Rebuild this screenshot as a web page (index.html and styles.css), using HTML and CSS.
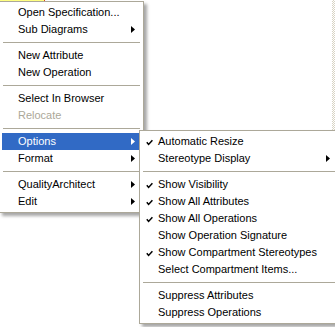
FILE: index.html
```html
<!DOCTYPE html>
<html lang="en">
<head>
    <meta charset="UTF-8">
    <title>Class Context Menu</title>
    <link rel="stylesheet" href="styles.css">
</head>
<body>
    <div class="canvas">
        <div class="selection-mark"></div>
        <div class="window-edge"></div>

        <div class="menu main-menu">
            <div class="item">Open Specification...</div>
            <div class="item has-sub">Sub Diagrams
                <svg class="arrow" width="4" height="7" viewBox="0 0 4 7"><polygon points="0,0 4,3.5 0,7"/></svg>
            </div>
            <div class="sep"></div>
            <div class="item">New Attribute</div>
            <div class="item">New Operation</div>
            <div class="sep"></div>
            <div class="item">Select In Browser</div>
            <div class="item disabled">Relocate</div>
            <div class="sep"></div>
            <div class="item has-sub active">Options
                <svg class="arrow" width="4" height="7" viewBox="0 0 4 7"><polygon points="0,0 4,3.5 0,7"/></svg>
            </div>
            <div class="item has-sub">Format
                <svg class="arrow" width="4" height="7" viewBox="0 0 4 7"><polygon points="0,0 4,3.5 0,7"/></svg>
            </div>
            <div class="sep"></div>
            <div class="item has-sub">QualityArchitect
                <svg class="arrow" width="4" height="7" viewBox="0 0 4 7"><polygon points="0,0 4,3.5 0,7"/></svg>
            </div>
            <div class="item has-sub">Edit
                <svg class="arrow" width="4" height="7" viewBox="0 0 4 7"><polygon points="0,0 4,3.5 0,7"/></svg>
            </div>
        </div>

        <!-- Options submenu -->
        <div class="menu sub-menu">
            <div class="item checked">Automatic Resize
                <svg class="check" width="7" height="7" viewBox="0 0 7 7"><polyline points="0.8,3.2 2.6,5.4 6.4,1.2"/></svg>
            </div>
            <div class="item has-sub">Stereotype Display
                <svg class="arrow" width="4" height="7" viewBox="0 0 4 7"><polygon points="0,0 4,3.5 0,7"/></svg>
            </div>
            <div class="sep"></div>
            <div class="item checked">Show Visibility
                <svg class="check" width="7" height="7" viewBox="0 0 7 7"><polyline points="0.8,3.2 2.6,5.4 6.4,1.2"/></svg>
            </div>
            <div class="item checked">Show All Attributes
                <svg class="check" width="7" height="7" viewBox="0 0 7 7"><polyline points="0.8,3.2 2.6,5.4 6.4,1.2"/></svg>
            </div>
            <div class="item checked">Show All Operations
                <svg class="check" width="7" height="7" viewBox="0 0 7 7"><polyline points="0.8,3.2 2.6,5.4 6.4,1.2"/></svg>
            </div>
            <div class="item">Show Operation Signature</div>
            <div class="item checked">Show Compartment Stereotypes
                <svg class="check" width="7" height="7" viewBox="0 0 7 7"><polyline points="0.8,3.2 2.6,5.4 6.4,1.2"/></svg>
            </div>
            <div class="item">Select Compartment Items...</div>
            <div class="sep"></div>
            <div class="item">Suppress Attributes</div>
            <div class="item">Suppress Operations</div>
        </div>
    </div>
</body>
</html>
```

FILE: styles.css
```css
body {
    margin: 0;
    background-color: #fff;
}

.canvas {
    position: relative;
    width: 335px;
    height: 327px;
    overflow: hidden;
    background-color: #fff;
    font-family: 'Liberation Sans', Arial, sans-serif;
    font-size: 11px;
    color: #000;
}

.selection-mark {
    position: absolute;
    left: 0;
    top: 0;
    width: 44px;
    height: 1px;
    background-color: #ffff80;
    border-right: 1px solid #e04020;
}

.window-edge {
    position: absolute;
    left: 332px;
    top: 0;
    width: 3px;
    height: 130px;
    background: repeating-conic-gradient(#d8d4c4 0 25%, #fff 0 50%) 0 0 / 2px 2px;
}

.menu {
    background-color: #fff;
    border: 1px solid #aca899;
    padding: 2px;
    box-shadow: 3px 3px 3px rgba(0, 0, 0, 0.35);
}

.main-menu {
    width: 139px;
    margin-left: -1px;
    margin-top: 1px;
}

.sub-menu {
    position: absolute;
    left: 139px;
    top: 130px;
    width: 194px;
}

.item {
    position: relative;
    height: 17px;
    line-height: 17px;
    padding-left: 16px;
    white-space: nowrap;
}

.item.disabled {
    color: #aca899;
}

.item.active {
    background-color: #316ac5;
    color: #fff;
}

.arrow {
    position: absolute;
    right: 6px;
    top: 5px;
    fill: #000;
}

.item.active .arrow {
    fill: #fff;
}

.check {
    position: absolute;
    left: 4px;
    top: 6px;
    fill: none;
    stroke: #000;
    stroke-width: 1.5;
}

.sep {
    height: 9px;
    position: relative;
}

.sep::after {
    content: '';
    position: absolute;
    left: 1px;
    right: 1px;
    top: 4px;
    height: 1px;
    background-color: #aca899;
}
```
